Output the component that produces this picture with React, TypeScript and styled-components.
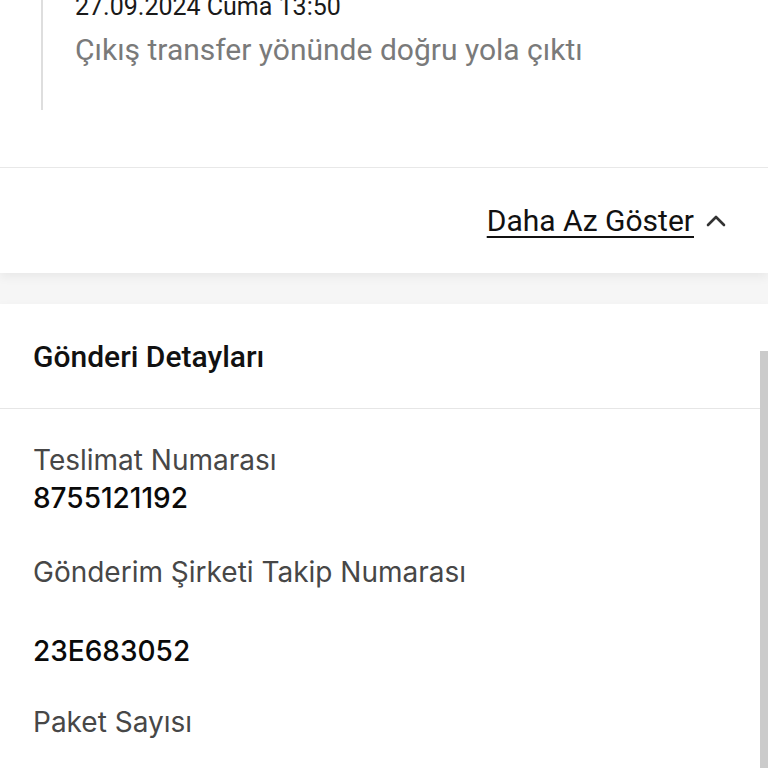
import styled, { createGlobalStyle } from "styled-components";

const GlobalStyle = createGlobalStyle`
  html, body {
    margin: 0;
    padding: 0;
    background: #f6f6f6;
    overflow: hidden;
  }
  body {
    font-family: Roboto, "Noto Sans", sans-serif;
    color: #111;
  }
`;

const Page = styled.div`
  display: flex;
  flex-direction: column;
  gap: 31px;
  height: 768px;
  overflow: hidden;
`;

const Card = styled.section<{ $grow?: boolean }>`
  background: #fff;
  box-shadow: 0 4px 10px rgba(0, 0, 0, 0.06);
  position: relative;
  flex: ${(p) => (p.$grow ? "1 0 auto" : "0 0 auto")};
`;

const Timeline = styled.div`
  padding: 0 42px 57px 41px;
  margin-top: -10px;
`;

const Entry = styled.div`
  border-left: 2px solid #dedede;
  padding: 0 0 42px 32px;
  display: flex;
  flex-direction: column;
  gap: 8px;
`;

const EntryDate = styled.div`
  font-size: 25px;
  line-height: 34px;
  color: #1a1a1a;
`;

const EntryText = styled.div`
  font-size: 30px;
  line-height: 36px;
  color: #7a7a7a;
`;

const Footer = styled.div`
  border-top: 1px solid #e8e8e8;
  height: 105px;
  display: flex;
  align-items: center;
  justify-content: flex-end;
  padding-right: 40px;
  gap: 10px;
`;

const ToggleLink = styled.a`
  font-size: 30px;
  color: #111;
  text-decoration: underline;
  text-underline-offset: 5px;
  text-decoration-thickness: 2px;
  cursor: pointer;
`;

const CardHeader = styled.div`
  height: 104px;
  display: flex;
  align-items: center;
  padding-left: 33px;
  border-bottom: 1px solid #e6e6e6;
  font-size: 30px;
  font-weight: 500;
  color: #111;
`;

const Fields = styled.div`
  padding: 33px 33px 0;
  display: flex;
  flex-direction: column;
  font-family: Inter, "Noto Sans", sans-serif;
`;

const Field = styled.div<{ $spread?: boolean; $after?: number }>`
  display: flex;
  flex-direction: column;
  gap: ${(p) => (p.$spread ? "43px" : "2px")};
  margin-bottom: ${(p) => p.$after ?? 0}px;
`;

const Label = styled.div`
  font-size: 28px;
  line-height: 36px;
  color: #474747;
`;

const Value = styled.div`
  font-size: 28px;
  line-height: 36px;
  font-weight: 500;
  color: #0a0a0a;
`;

const Scrollbar = styled.div`
  position: absolute;
  right: 0;
  top: 47px;
  bottom: 0;
  width: 8px;
  background: #cbcbcb;
`;

const ChevronUp = () => (
  <svg width="24" height="24" viewBox="0 0 24 24" fill="none" stroke="#333" strokeWidth="2.6" strokeLinecap="round" strokeLinejoin="round">
    <path d="M4 16l8-8 8 8" />
  </svg>
);

const App = () => {
  return (
    <>
      <GlobalStyle />
      <Page>
        <Card>
          <Timeline>
            <Entry>
              <EntryDate>27.09.2024 Cuma 13:50</EntryDate>
              <EntryText>Çıkış transfer yönünde doğru yola çıktı</EntryText>
            </Entry>
          </Timeline>
          <Footer>
            <ToggleLink>Daha Az Göster</ToggleLink>
            <ChevronUp />
          </Footer>
        </Card>
        <Card $grow>
          <Scrollbar />
          <CardHeader>Gönderi Detayları</CardHeader>
          <Fields>
            <Field $after={38}>
              <Label>Teslimat Numarası</Label>
              <Value>8755121192</Value>
            </Field>
            <Field $spread $after={35}>
              <Label>Gönderim Şirketi Takip Numarası</Label>
              <Value>23E683052</Value>
            </Field>
            <Field>
              <Label>Paket Sayısı</Label>
            </Field>
          </Fields>
        </Card>
      </Page>
    </>
  );
};

export default App;
